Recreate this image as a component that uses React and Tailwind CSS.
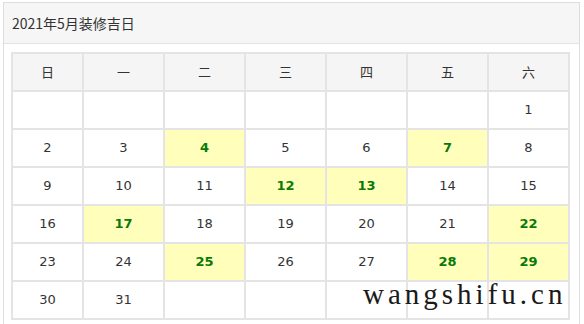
import React from "react";

const weeks = [
  [null, null, null, null, null, null, 1],
  [2, 3, 4, 5, 6, 7, 8],
  [9, 10, 11, 12, 13, 14, 15],
  [16, 17, 18, 19, 20, 21, 22],
  [23, 24, 25, 26, 27, 28, 29],
  [30, 31, null, null, null, null, null],
];
const good = new Set([4, 7, 12, 13, 17, 22, 25, 28, 29]);
const heads = ["日", "一", "二", "三", "四", "五", "六"];

export default function App() {
  return (
    <div className="relative w-[584px] h-[324px] overflow-hidden bg-white pl-[3px] pt-[2px]">
      <div className="w-[577px] border border-[#dddddd] bg-white">
        <div className="h-[41px] flex items-center pl-[8px] bg-[#f6f6f6] border-b border-[#e2e2e2] text-[14px] text-[#333] font-['Noto_Sans_CJK_SC','Noto_Sans',sans-serif]">
          2021年5月装修吉日
        </div>
        <div className="px-[7px] pt-[8px] pb-[8px]">
          <div className="grid grid-cols-[69px_repeat(6,79px)] auto-rows-[36px] gap-[2px] p-[2px] bg-[#e4e4e4] w-[559px]">
            {heads.map((h) => (
              <div
                key={h}
                className="bg-[#f5f5f5] flex items-center justify-center text-[13px] text-[#333] font-['Noto_Sans_CJK_SC',sans-serif]"
              >
                {h}
              </div>
            ))}
            {weeks.flat().map((d, i) => {
              const g = d && good.has(d);
              return (
                <div
                  key={i}
                  className={
                    "flex items-center justify-center text-[13px] font-['DejaVu_Sans',sans-serif] " +
                    (g
                      ? "bg-[#ffffbb] text-[#0a7a0a] font-bold"
                      : "bg-white text-[#333]")
                  }
                >
                  {d ?? ""}
                </div>
              );
            })}
          </div>
        </div>
      </div>
      <div className="absolute left-[363px] top-[279px] whitespace-nowrap text-[29px] leading-[30px] tracking-[4px] text-[#1a1a1a] font-['Liberation_Serif',serif]">
        wangshifu.cn
      </div>
    </div>
  );
}
